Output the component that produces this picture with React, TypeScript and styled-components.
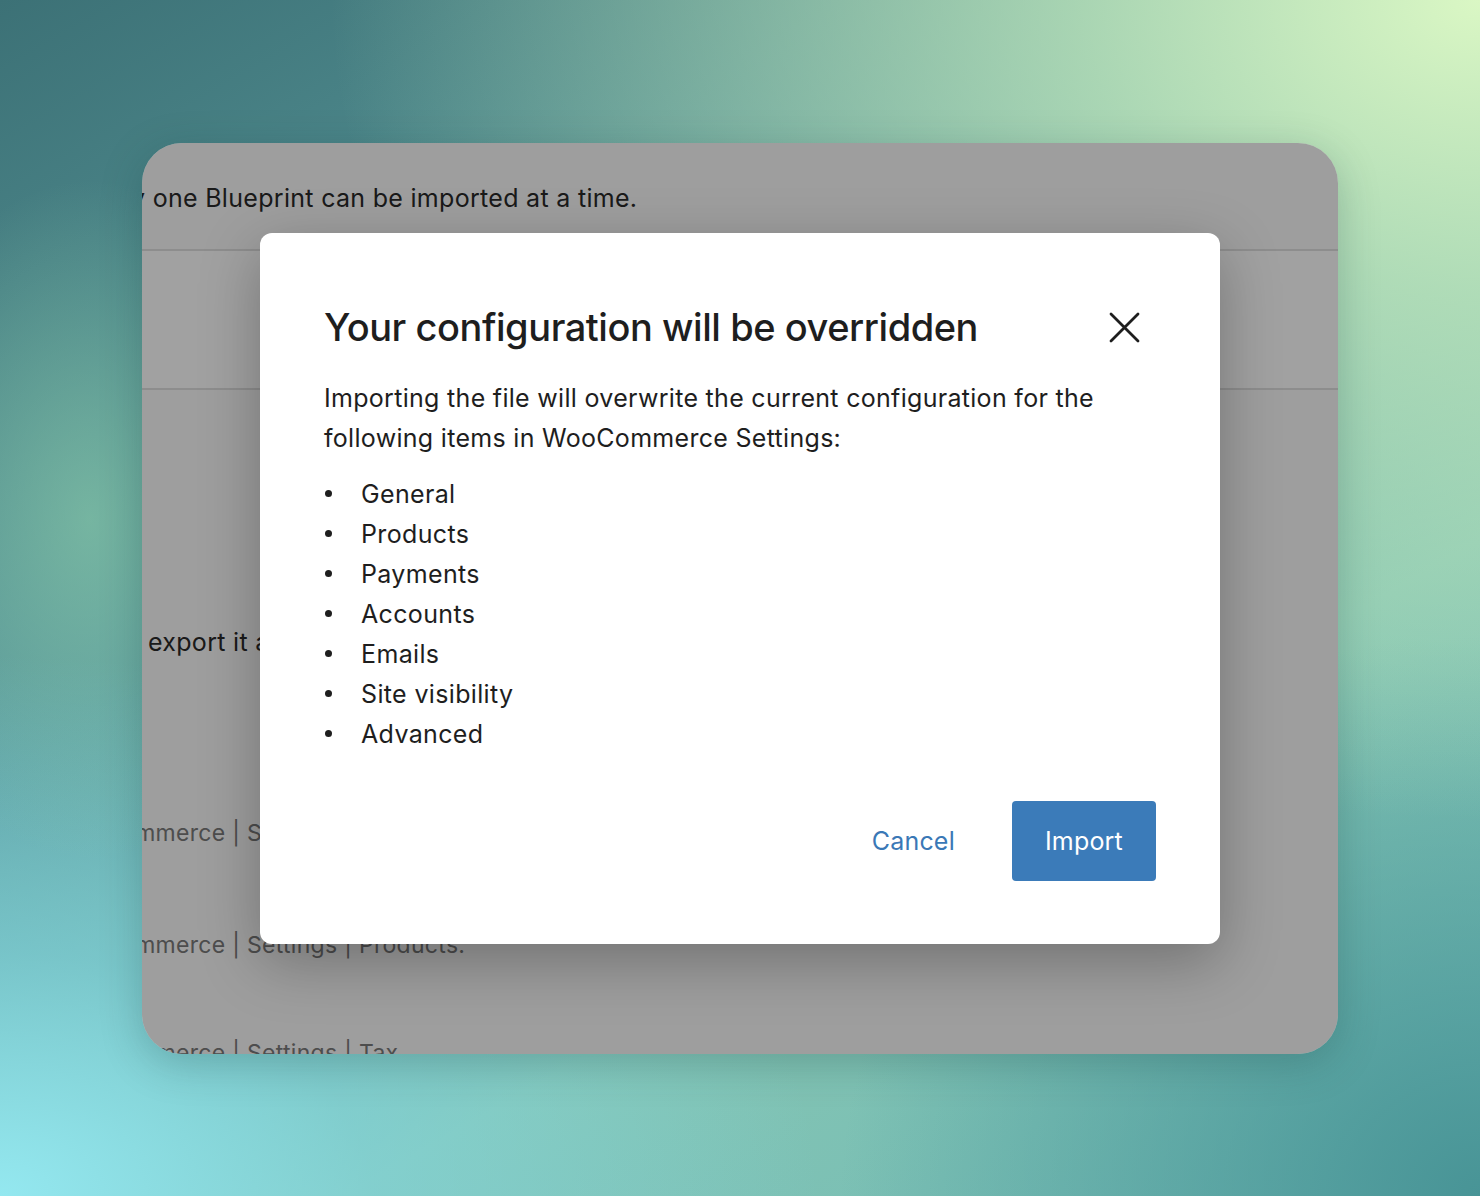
import * as React from "react";
import styled, { createGlobalStyle } from "styled-components";

const GlobalStyle = createGlobalStyle`
  html, body {
    margin: 0;
    padding: 0;
    width: 1480px;
    height: 1196px;
    overflow: hidden;
  }
  body {
    font-family: Inter, "Noto Sans", "Liberation Sans", sans-serif;
    -webkit-font-smoothing: antialiased;
  }
`;

// Backdrop gradient: teal top-left, pale green top-right, cyan bottom-left
const Backdrop = styled.main`
  width: 1480px;
  height: 1196px;
  box-sizing: border-box;
  display: flex;
  align-items: center;
  justify-content: center;
  background:
    radial-gradient(ellipse 220px 340px at 90px 520px, rgba(140, 205, 170, 0.6) 0%, rgba(140, 205, 170, 0) 100%),
    radial-gradient(ellipse 1150px 820px at 1480px 0px, rgba(218, 247, 196, 1) 0%, rgba(196, 234, 188, 0.75) 35%, rgba(150, 205, 175, 0) 100%),
    radial-gradient(ellipse 820px 540px at 0px 1196px, rgba(148, 232, 240, 1) 0%, rgba(130, 215, 225, 0.6) 45%, rgba(110, 190, 200, 0) 100%),
    radial-gradient(ellipse 640px 560px at 1480px 1196px, rgba(72, 148, 150, 1) 0%, rgba(80, 160, 160, 0) 100%),
    linear-gradient(150deg, #3c7176 0%, #5c9c9e 38%, #84c4b2 68%, #72bcb8 100%);
`;

const Window = styled.section`
  position: relative;
  width: 1196px;
  height: 911px;
  border-radius: 40px;
  overflow: hidden;
  background: #fbfbfb;
  box-shadow: 0 10px 40px rgba(20, 60, 60, 0.25);
`;

const Page = styled.div`
  display: flex;
  flex-direction: column;
  padding-top: 38px;
`;

const PageText = styled.p<{ $shift: number; $muted?: boolean; $top: number }>`
  margin: ${(p) => p.$top}px 0 0 ${(p) => p.$shift}px;
  font-size: ${(p) => (p.$muted ? 23 : 25)}px;
  letter-spacing: 0.3px;
  line-height: 34px;
  white-space: nowrap;
  color: ${(p) => (p.$muted ? "#7a7a7a" : "#2a2a2a")};
`;

const DropZone = styled.div`
  margin-top: 34px;
  height: 137px;
  border-top: 2px solid #e0e0e0;
  border-bottom: 2px solid #e0e0e0;
  background: #ffffff;
`;

const Overlay = styled.div`
  position: absolute;
  inset: 0;
  background: rgba(0, 0, 0, 0.37);
  display: flex;
  justify-content: center;
  align-items: flex-start;
  padding-top: 90px;
`;

const Modal = styled.div`
  width: 960px;
  box-sizing: border-box;
  background: #ffffff;
  border-radius: 12px;
  padding: 70px 64px 63px;
  box-shadow: 0 18px 60px rgba(0, 0, 0, 0.28);
  display: flex;
  flex-direction: column;
`;

const Header = styled.header`
  display: flex;
  align-items: center;
  justify-content: space-between;
`;

const Title = styled.h1`
  margin: 0;
  font-size: 38px;
  line-height: 48px;
  font-weight: 500;
  letter-spacing: -0.45px;
  color: #1e1e1e;
`;

const CloseButton = styled.button`
  width: 48px;
  height: 48px;
  margin-right: 8px;
  padding: 0;
  border: none;
  background: transparent;
  display: flex;
  align-items: center;
  justify-content: center;
  cursor: pointer;
`;

const Body = styled.p`
  margin: 27px 0 0;
  font-size: 25px;
  line-height: 40px;
  letter-spacing: 0.3px;
  color: #1e1e1e;
`;

const List = styled.ul`
  margin: 16px 0 0;
  padding: 0;
  list-style: none;
`;

const Item = styled.li`
  display: flex;
  align-items: center;
  height: 40px;
  font-size: 25px;
  letter-spacing: 0.35px;
  color: #1e1e1e;
`;

const Bullet = styled.span`
  width: 7px;
  height: 7px;
  border-radius: 50%;
  background: #1e1e1e;
  margin: 0 29px 0 1px;
`;

const Footer = styled.footer`
  margin-top: 47px;
  display: flex;
  justify-content: flex-end;
  align-items: center;
  gap: 33px;
`;

const Button = styled.button<{ $primary?: boolean }>`
  height: 80px;
  padding: 0 ${(p) => (p.$primary ? 33 : 24)}px;
  border: none;
  border-radius: 4px;
  font-family: inherit;
  font-size: 25px;
  letter-spacing: 0.2px;
  cursor: pointer;
  color: ${(p) => (p.$primary ? "#ffffff" : "#3a78b6")};
  background: ${(p) => (p.$primary ? "#3b7bb9" : "transparent")};
`;

const items = [
  "General",
  "Products",
  "Payments",
  "Accounts",
  "Emails",
  "Site visibility",
  "Advanced",
];

const CloseIcon = () => (
  <svg width="32" height="32" viewBox="0 0 32 32" fill="none">
    <path d="M3 3 L30 30 M30 3 L3 30" stroke="#1e1e1e" strokeWidth="2.8" strokeLinecap="round" />
  </svg>
);

const App: React.FC = () => {
  return (
    <>
      <GlobalStyle />
      <Backdrop>
        <Window>
          <Page>
            <PageText $shift={-52} $top={0}>Only one Blueprint can be imported at a time.</PageText>
            <DropZone />
            <PageText $shift={6} $top={235}>export it as a Blueprint to use it on another site.</PageText>
            <PageText $shift={-88} $top={157} $muted>WooCommerce | Settings | General.</PageText>
            <PageText $shift={-88} $top={78} $muted>WooCommerce | Settings | Products.</PageText>
            <PageText $shift={-88} $top={74} $muted>WooCommerce | Settings | Tax.</PageText>
          </Page>
          <Overlay>
            <Modal role="dialog">
              <Header>
                <Title>Your configuration will be overridden</Title>
                <CloseButton aria-label="Close">
                  <CloseIcon />
                </CloseButton>
              </Header>
              <Body>
                Importing the file will overwrite the current configuration for the following items in
                WooCommerce Settings:
              </Body>
              <List>
                {items.map((item) => (
                  <Item key={item}>
                    <Bullet />
                    {item}
                  </Item>
                ))}
              </List>
              <Footer>
                <Button>Cancel</Button>
                <Button $primary>Import</Button>
              </Footer>
            </Modal>
          </Overlay>
        </Window>
      </Backdrop>
    </>
  );
};

export default App;
